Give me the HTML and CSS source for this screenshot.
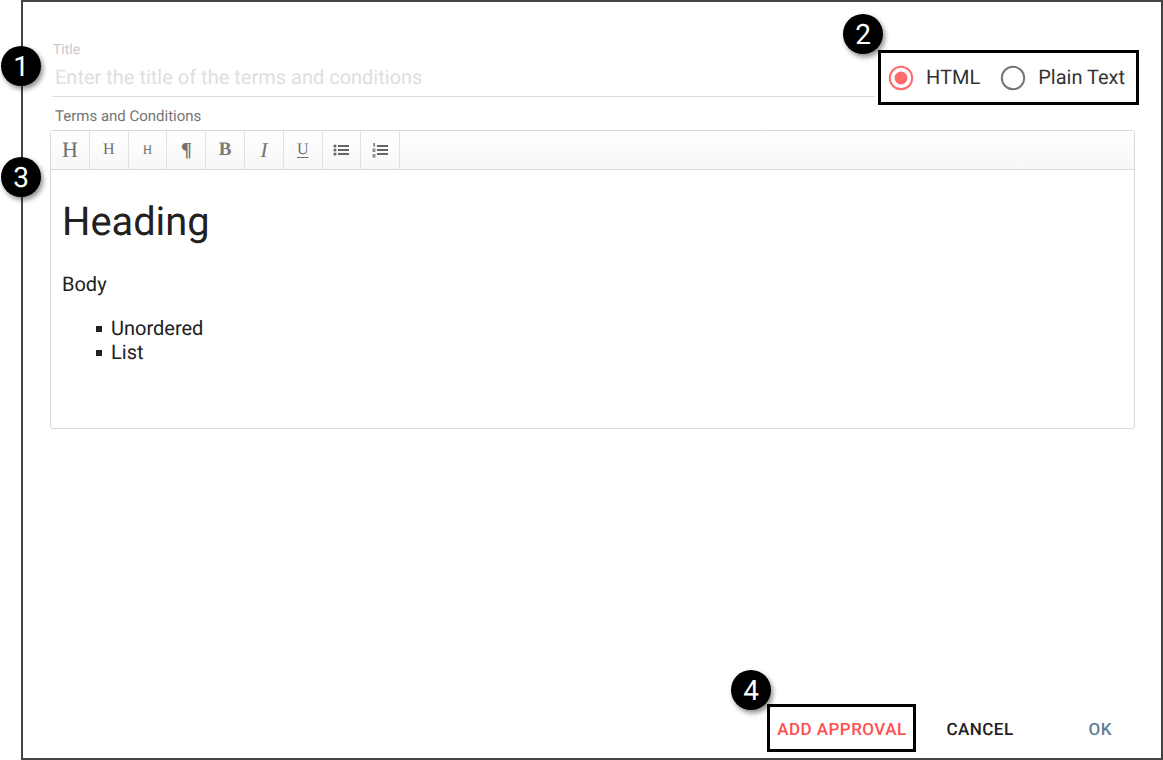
FILE: index.html
```html
<!DOCTYPE html>
<html lang="en">
<head>
<meta charset="utf-8">
<title>Terms and Conditions</title>
<link rel="stylesheet" href="styles.css">
</head>
<body>
<div class="frame">
  <div class="top-row">
    <div class="title-field">
      <div class="title-label">Title</div>
      <div class="title-input">Enter the title of the terms and conditions</div>
    </div>
    <div class="radio-group">
      <div class="radio-item">
        <svg class="radio" width="26" height="26" viewBox="0 0 26 26"><circle cx="13" cy="13" r="11.2" fill="none" stroke="#ff6b6b" stroke-width="2"/><circle cx="13" cy="13" r="6.5" fill="#ff6b6b"/></svg>
        <span class="radio-text">HTML</span>
      </div>
      <div class="radio-item">
        <svg class="radio" width="26" height="26" viewBox="0 0 26 26"><circle cx="13" cy="13" r="11.2" fill="none" stroke="#757575" stroke-width="2"/></svg>
        <span class="radio-text">Plain Text</span>
      </div>
    </div>
  </div>
  <div class="terms-label">Terms and Conditions</div>
  <div class="editor">
    <div class="toolbar">
      <div class="tool h1">H</div>
      <div class="tool h2">H</div>
      <div class="tool h3">H</div>
      <div class="tool para">¶</div>
      <div class="tool bold">B</div>
      <div class="tool ital">I</div>
      <div class="tool under">U</div>
      <div class="tool">
        <svg width="16" height="14" viewBox="0 0 16 14"><g fill="#666"><circle cx="2" cy="3" r="1.6"/><circle cx="2" cy="7" r="1.6"/><circle cx="2" cy="11" r="1.6"/><rect x="5" y="2" width="11" height="2"/><rect x="5" y="6" width="11" height="2"/><rect x="5" y="10" width="11" height="2"/></g></svg>
      </div>
      <div class="tool">
        <svg width="16" height="16" viewBox="0 0 16 16"><g fill="#666"><rect x="5" y="3" width="11" height="2"/><rect x="5" y="7" width="11" height="2"/><rect x="5" y="11" width="11" height="2"/><rect x="1.5" y="1" width="1.4" height="3.6"/><rect x="0.5" y="6.5" width="3" height="3.6" opacity="0.7"/><rect x="0.5" y="12" width="3" height="3.6" opacity="0.7"/></g></svg>
      </div>
    </div>
    <div class="content">
      <h1 class="heading">Heading</h1>
      <p class="body-text">Body</p>
      <ul class="list">
        <li class="list-item">Unordered</li>
        <li class="list-item">List</li>
      </ul>
    </div>
  </div>
  <div class="actions">
    <div class="btn add">ADD APPROVAL</div>
    <div class="btn cancel">CANCEL</div>
    <div class="btn ok">OK</div>
  </div>
</div>
<div class="badge b1">1</div>
<div class="badge b2">2</div>
<div class="badge b3">3</div>
<div class="badge b4">4</div>
</body>
</html>
```

FILE: styles.css
```css
* { box-sizing: border-box; }
html, body { margin: 0; padding: 0; background: #fff; }
body {
  width: 1163px;
  height: 760px;
  position: relative;
  overflow: hidden;
  font-family: Roboto, "Liberation Sans", sans-serif;
  color: #212121;
  text-rendering: geometricPrecision;
}
.frame {
  margin-left: 21px;
  width: 1142px;
  height: 760px;
  border: 2px solid #444;
  padding: 0 26px 0 27px;
  display: flex;
  flex-direction: column;
}
.top-row {
  display: flex;
  align-items: flex-start;
  padding-top: 40px;
  height: 103px;
  margin-right: -5px;
}
.title-field {
  width: 823px;
  margin-left: 2px;
  height: 55px;
  border-bottom: 1px solid #ddd;
}
.title-label {
  font-size: 14px;
  line-height: 16px;
  color: #c8c8c8;
  padding-left: 1px;
}
.title-input {
  font-size: 20px;
  line-height: 26px;
  margin-top: 6px;
  padding-left: 3px;
  color: #dedede;
}
.radio-group {
  margin-left: 3px;
  margin-top: 8px;
  width: 261px;
  height: 55px;
  border: 3px solid #000;
  display: flex;
  align-items: center;
  padding-left: 7px;
  gap: 20px;
  font-size: 20px;
}
.radio-item { display: flex; align-items: center; gap: 12px; color: #333; }
.radio { display: block; }
.radio-text { padding-bottom: 2px; }
.terms-label {
  font-size: 15px;
  line-height: 16px;
  color: #757575;
  padding-left: 5px;
  margin-top: 3px;
}
.editor {
  margin-top: 6px;
  width: 1085px;
  height: 299px;
  border: 1px solid #d9d9d9;
  border-radius: 3px;
}
.toolbar {
  display: flex;
  height: 39px;
  border-bottom: 1px solid #d9d9d9;
  background: linear-gradient(#fff, #f7f7f7);
}
.tool {
  width: 38.8px;
  display: flex;
  align-items: center;
  justify-content: center;
  border-right: 1px solid #e2e2e2;
  font-family: "Liberation Serif", serif;
  color: #707070;
}
.h1 { font-size: 22px; }
.h2 { font-size: 16px; }
.h3 { font-size: 13px; }
.para { font-size: 20px; font-weight: 700; }
.bold { font-size: 19px; font-weight: 700; color: #7a7a7a; }
.ital { font-size: 21px; font-style: italic; }
.under { font-size: 16px; text-decoration: underline; text-underline-offset: 3px; }
.content { padding: 0 11px; }
.heading {
  margin: 30px 0 0;
  font-size: 39.8px;
  line-height: 44px;
  font-weight: 400;
}
.body-text {
  margin: 28px 0 0;
  font-size: 20px;
  line-height: 24px;
}
.list {
  margin: 20px 0 0;
  padding-left: 49px;
  font-size: 20px;
  line-height: 24px;
  list-style: none;
}
.list-item { position: relative; }
.list-item::before {
  content: "";
  position: absolute;
  left: -15px;
  top: 10px;
  width: 6px;
  height: 6px;
  background: #212121;
}
.actions {
  margin-top: auto;
  display: flex;
  align-items: center;
  height: 48px;
  margin-bottom: 6px;
  margin-right: -5px;
  justify-content: flex-end;
  font-size: 17px;
  font-weight: 500;
  letter-spacing: 0.48px;
}
.btn { white-space: nowrap; }
.add {
  color: #ff4f4f;
  border: 3px solid #000;
  height: 48px;
  width: 149px;
  display: flex;
  align-items: center;
  justify-content: center;
  padding-top: 3px;
}
.cancel { color: #212121; margin-left: 30px; padding-top: 3px; }
.ok { color: #5d7f92; margin-left: 75px; margin-right: 28px; padding-top: 3px; }
.badge {
  position: absolute;
  width: 40px;
  height: 40px;
  border-radius: 50%;
  background: #000;
  color: #fff;
  display: flex;
  align-items: center;
  justify-content: center;
  font-size: 28px;
  box-shadow: 2px 3px 5px rgba(0, 0, 0, 0.45);
}
.b1 { left: 1px; top: 46px; }
.b2 { left: 843px; top: 14px; }
.b3 { left: 1px; top: 157px; }
.b4 { left: 731px; top: 670px; }
```
